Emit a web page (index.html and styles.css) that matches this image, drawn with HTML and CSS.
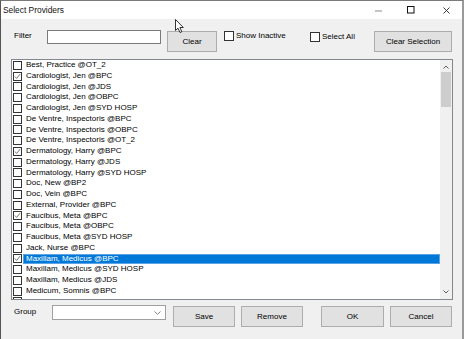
FILE: index.html
```html
<!DOCTYPE html>
<html lang="en">
<head>
  <meta charset="UTF-8" />
  <title>Select Providers</title>
  <link rel="stylesheet" href="styles.css">
</head>
<body>
<div class="window">
  <div class="titlebar">
    <span class="title">Select Providers</span>
    <div class="controls">
      <svg class="ctl-min" width="8" height="2" viewBox="0 0 8 2"><line x1="0" y1="1" x2="7" y2="1" stroke="#8a8a8a" stroke-width="1"/></svg>
      <svg class="ctl-max" width="8" height="8" viewBox="0 0 8 8"><rect x="0.5" y="0.5" width="6.5" height="6.5" fill="none" stroke="#111" stroke-width="1"/></svg>
      <svg class="ctl-close" width="7" height="7" viewBox="0 0 7 7"><path d="M0.5 0.5 L6.5 6.5 M6.5 0.5 L0.5 6.5" stroke="#222" stroke-width="0.9"/></svg>
    </div>
  </div>

  <div class="content">
    <div class="toolbar">
      <label class="field-label">Filter</label>
      <div class="textbox"></div>
      <button class="btn btn-clear">Clear</button>
      <div class="check-group inactive">
        <span class="box"></span><span>Show Inactive</span>
      </div>
      <div class="check-group select-all">
        <span class="box"></span><span>Select All</span>
      </div>
      <button class="btn btn-clear-sel">Clear Selection</button>
    </div>

    <div class="list">
      <div class="items">
        <div class="row"><span class="box"></span><span class="text">Best, Practice @OT_2</span></div>
        <div class="row"><span class="box checked"><svg width="8" height="8" viewBox="0 0 8 8"><path d="M1 4 L3 6.2 L7 1.2" fill="none" stroke="#555" stroke-width="0.9"/></svg></span><span class="text">Cardiologist, Jen @BPC</span></div>
        <div class="row"><span class="box"></span><span class="text">Cardiologist, Jen @JDS</span></div>
        <div class="row"><span class="box"></span><span class="text">Cardiologist, Jen @OBPC</span></div>
        <div class="row"><span class="box"></span><span class="text">Cardiologist, Jen @SYD HOSP</span></div>
        <div class="row"><span class="box"></span><span class="text">De Ventre, Inspectoris @BPC</span></div>
        <div class="row"><span class="box"></span><span class="text">De Ventre, Inspectoris @OBPC</span></div>
        <div class="row"><span class="box"></span><span class="text">De Ventre, Inspectoris @OT_2</span></div>
        <div class="row"><span class="box checked"><svg width="8" height="8" viewBox="0 0 8 8"><path d="M1 4 L3 6.2 L7 1.2" fill="none" stroke="#555" stroke-width="0.9"/></svg></span><span class="text">Dermatology, Harry @BPC</span></div>
        <div class="row"><span class="box"></span><span class="text">Dermatology, Harry @JDS</span></div>
        <div class="row"><span class="box"></span><span class="text">Dermatology, Harry @SYD HOSP</span></div>
        <div class="row"><span class="box"></span><span class="text">Doc, New @BP2</span></div>
        <div class="row"><span class="box"></span><span class="text">Doc, Vein @BPC</span></div>
        <div class="row"><span class="box"></span><span class="text">External, Provider @BPC</span></div>
        <div class="row"><span class="box checked"><svg width="8" height="8" viewBox="0 0 8 8"><path d="M1 4 L3 6.2 L7 1.2" fill="none" stroke="#555" stroke-width="0.9"/></svg></span><span class="text">Faucibus, Meta @BPC</span></div>
        <div class="row"><span class="box"></span><span class="text">Faucibus, Meta @OBPC</span></div>
        <div class="row"><span class="box"></span><span class="text">Faucibus, Meta @SYD HOSP</span></div>
        <div class="row"><span class="box"></span><span class="text">Jack, Nurse @BPC</span></div>
        <div class="row selected"><span class="box checked"><svg width="8" height="8" viewBox="0 0 8 8"><path d="M1 4 L3 6.2 L7 1.2" fill="none" stroke="#555" stroke-width="0.9"/></svg></span><span class="text">Maxillam, Medicus @BPC</span></div>
        <div class="row"><span class="box"></span><span class="text">Maxillam, Medicus @SYD HOSP</span></div>
        <div class="row"><span class="box"></span><span class="text">Maxillam, Medicus @JDS</span></div>
        <div class="row"><span class="box"></span><span class="text">Medicum, Somnis @BPC</span></div>
        <div class="row"><span class="box"></span><span class="text"></span></div>
      </div>
      <div class="scrollbar">
        <svg class="arrow" width="6" height="4" viewBox="0 0 6 4"><path d="M0.5 3.5 L3 1 L5.5 3.5" fill="none" stroke="#606060" stroke-width="1"/></svg>
        <div class="thumb"></div>
        <div class="track"></div>
        <svg class="arrow" width="6" height="4" viewBox="0 0 6 4"><path d="M0.5 0.5 L3 3 L5.5 0.5" fill="none" stroke="#606060" stroke-width="1"/></svg>
      </div>
    </div>

    <div class="footer">
      <label class="field-label group-label">Group</label>
      <div class="combo">
        <svg width="7" height="4" viewBox="0 0 7 4"><path d="M0.5 0.5 L3.5 3.3 L6.5 0.5" fill="none" stroke="#777" stroke-width="0.9"/></svg>
      </div>
      <button class="btn btn-save">Save</button>
      <button class="btn btn-remove">Remove</button>
      <button class="btn btn-ok">OK</button>
      <button class="btn btn-cancel">Cancel</button>
    </div>
  </div>

  <svg class="cursor" width="10" height="15" viewBox="0 0 10 15">
    <path d="M0.5 0.5 L0.5 11.5 L3 9.2 L5 13.5 L6.8 12.7 L4.9 8.5 L8.3 8.5 Z" fill="#fff" stroke="#000" stroke-width="0.8"/>
  </svg>
</div>
</body>
</html>
```

FILE: styles.css
```css
body {
  margin: 0;
  font-family: "Liberation Sans", Arial, sans-serif;
  font-size: 8px;
  color: #000;
  background: #fff;
}
.window {
  position: relative;
  width: 464px;
  height: 339px;
  box-sizing: border-box;
  border-top: 1px solid #7a7a7a;
  border-left: 1px solid #555;
  border-right: 2px solid #9a9a9a;
  background: #f0f0f0;
  overflow: hidden;
}
.titlebar {
  height: 18px;
  background: #fff;
  display: flex;
  align-items: center;
  justify-content: space-between;
}
.title {
  padding-left: 2px;
  font-size: 8.4px;
  color: #111;
}
.controls {
  display: flex;
  align-items: center;
  height: 18px;
}
.ctl-min {
  margin-right: 24px;
  margin-top: 1px;
}
.ctl-max {
  margin-right: 28px;
}
.ctl-close {
  margin-right: 12px;
}

.content {
  display: flex;
  flex-direction: column;
}
.toolbar {
  height: 40px;
  box-sizing: border-box;
  padding-top: 11px;
  padding-left: 13px;
  display: flex;
  align-items: flex-start;
}
.field-label {
  width: 33px;
  line-height: 11px;
  padding-top: 0;
}
.textbox {
  width: 114px;
  height: 14px;
  box-sizing: border-box;
  background: #fff;
  border: 1px solid #7a7a7a;
}
.btn {
  font-family: "Liberation Sans", Arial, sans-serif;
  font-size: 8px;
  color: #000;
  height: 21px;
  padding: 0;
  margin-top: 1px;
  background: #e1e1e1;
  border: 1px solid #adadad;
  box-sizing: border-box;
}
.btn-clear {
  width: 50px;
  margin-left: 6px;
}
.check-group {
  display: flex;
  align-items: center;
  height: 11px;
}
.check-group .box {
  margin-right: 2px;
}
.inactive {
  width: 86px;
  margin-left: 7px;
}
.select-all {
  width: 64px;
  margin-top: 1px;
}
.btn-clear-sel {
  width: 78px;
}

.box {
  width: 10px;
  height: 10px;
  box-sizing: border-box;
  border: 1px solid #333;
  background: #fff;
  display: flex;
  align-items: center;
  justify-content: center;
  flex: none;
}

.list {
  margin-left: 10px;
  width: 442px;
  height: 241px;
  box-sizing: border-box;
  border: 1px solid #828790;
  background: #fff;
  display: flex;
  overflow: hidden;
}
.items {
  flex: 1;
  overflow: hidden;
}
.row {
  height: 10.75px;
  display: flex;
  align-items: center;
  padding-left: 1px;
}
.row .box {
  width: 9px;
  height: 9px;
}
.row .box svg {
  width: 7px;
  height: 7px;
}
.row .text {
  flex: 1;
  height: 10.75px;
  line-height: 10.75px;
  padding-left: 3px;
  margin-left: 1px;
  white-space: nowrap;
}
.row.selected .text {
  background: #0078d7;
  color: #fff;
  box-shadow: inset 0 0 0 1px #5aa3e6;
}

.scrollbar {
  width: 12px;
  background: #f0f0f0;
  display: flex;
  flex-direction: column;
  align-items: center;
}
.scrollbar .arrow {
  margin: 5px 0 3px;
}
.scrollbar .arrow:last-child {
  margin: 3px 0 5px;
}
.thumb {
  width: 10px;
  height: 35px;
  background: #cdcdcd;
}
.track {
  flex: 1;
}

.footer {
  height: 39px;
  box-sizing: border-box;
  padding-top: 5px;
  padding-left: 13px;
  display: flex;
  align-items: flex-start;
}
.group-label {
  width: 38px;
  padding-top: 1px;
}
.combo {
  width: 114px;
  height: 15px;
  box-sizing: border-box;
  background: #fff;
  border: 1px solid #a0a0a0;
  display: flex;
  align-items: center;
  justify-content: flex-end;
  padding-right: 4px;
}
.btn-save {
  width: 62px;
  margin-left: 7px;
}
.btn-remove {
  width: 62px;
  margin-left: 6px;
}
.btn-ok {
  width: 63px;
  margin-left: 18px;
}
.btn-cancel {
  width: 62px;
  margin-left: 6px;
}

.cursor {
  position: absolute;
  left: 174px;
  top: 18px;
}
```
